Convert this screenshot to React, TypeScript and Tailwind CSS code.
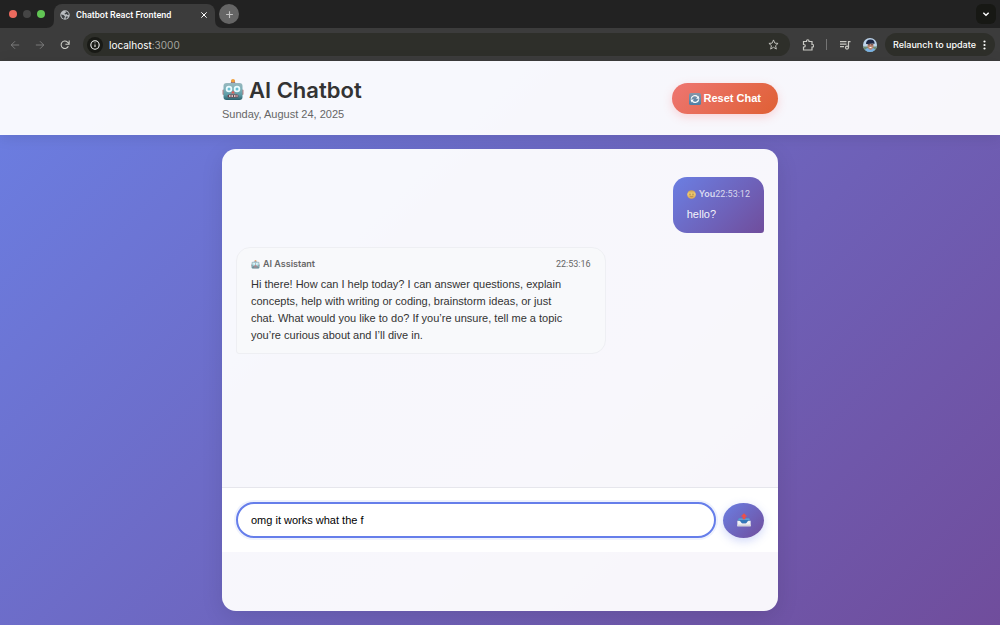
import { useState } from "react";

type IconProps = { className?: string };

function Robot({ className }: IconProps) {
  return (
    <svg viewBox="0 0 44 44" className={className} aria-hidden="true">
      <defs>
        <linearGradient id="robot-face" x1="0" y1="0" x2="0" y2="1">
          <stop offset="0" stopColor="#9ab9bf" />
          <stop offset=".35" stopColor="#7fb0b8" />
          <stop offset=".7" stopColor="#5c9ba6" />
          <stop offset="1" stopColor="#2b5f6b" />
        </linearGradient>
      </defs>
      <rect x="18" y="3" width="8" height="8" fill="#7b6a92" />
      <circle cx="22" cy="4" r="4" fill="#f1a13c" />
      <path d="M13 10c1-4 17-4 18 0z" fill="#7b6a92" />
      <rect x="1" y="21" width="4" height="11" rx="2" fill="#b98084" />
      <rect x="39" y="21" width="4" height="11" rx="2" fill="#b98084" />
      <rect x="3" y="8" width="38" height="34" rx="6" fill="url(#robot-face)" />
      <circle cx="14" cy="20" r="6.500" fill="#e9fbff" />
      <circle cx="30" cy="20" r="6.500" fill="#e9fbff" />
      <circle cx="14" cy="20" r="3" fill="#69bfd2" />
      <circle cx="30" cy="20" r="3" fill="#69bfd2" />
      <path d="M22 23l4 6h-8z" fill="#df5a55" />
      <rect x="11" y="31" width="22" height="6" rx="3" fill="#70414b" />
      <path d="M14 34h3M19 34h3M24 34h3M29 34h2" stroke="#f4eeee" strokeWidth="3" />
    </svg>
  );
}

function RefreshTile({ className }: IconProps) {
  return (
    <svg viewBox="0 0 32 32" className={className} aria-hidden="true">
      <defs>
        <linearGradient id="tile" x1="0" y1="0" x2="0" y2="1">
          <stop offset="0" stopColor="#8596a8" />
          <stop offset="1" stopColor="#4d7fa8" />
        </linearGradient>
      </defs>
      <rect width="32" height="32" rx="5" fill="url(#tile)" />
      <path d="M6 15a10 10 0 0 1 17-5M26 17a10 10 0 0 1-17 5" fill="none" stroke="#fff" strokeWidth="3.4" />
      <path d="M28 15h-9l6-8zM4 17h9l-6 8z" fill="#fff" />
    </svg>
  );
}

function Smiley({ className }: IconProps) {
  return (
    <svg viewBox="0 0 24 24" className={className} aria-hidden="true">
      <defs>
        <linearGradient id="smile" x1="0" y1="0" x2="0" y2="1">
          <stop offset="0" stopColor="#c99d50" />
          <stop offset=".4" stopColor="#efcb70" />
          <stop offset="1" stopColor="#dda653" />
        </linearGradient>
      </defs>
      <circle cx="12" cy="12" r="11.500" fill="url(#smile)" />
      <ellipse cx="8" cy="11" rx="1.300" ry="1.800" fill="#7d6139" />
      <ellipse cx="16" cy="11" rx="1.300" ry="1.800" fill="#7d6139" />
      <path d="M7 16q5 3 10 0" fill="none" stroke="#80603a" strokeWidth="1.300" />
    </svg>
  );
}

function Outbox({ className }: IconProps) {
  return (
    <svg viewBox="0 0 40 40" className={className} aria-hidden="true">
      <path d="M5 15h30l4 10H1z" fill="#3977b4" />
      <path d="M5 15h30l2 5H3z" fill="#5d9dd6" />
      <path d="M1 22h8l6 7h10l6-7h8v16H1z" fill="#f1f1f4" />
      <path d="M1 33h38v5H1z" fill="#d5d5da" />
      <path d="M7 20h26l-7 9H14z" fill="#3378b9" />
      <path d="M20 1l9 9h-5v8h-8v-8h-5z" fill="#ed5148" />
    </svg>
  );
}

function Globe({ className }: IconProps) {
  return (
    <svg viewBox="0 0 20 20" className={className} aria-hidden="true">
      <circle cx="10" cy="10" r="9.500" fill="#b9bcc0" />
      <path d="M11 2l5 3 2 4-3 1-2-2-3 1-1-2 3-2zM2 9l5 1 3 3-1 2-1 3-4-3zM12 13l4 0-2 4-3 0z" fill="#3d4043" />
    </svg>
  );
}

function Avatar({ className }: IconProps) {
  return (
    <svg viewBox="0 0 28 28" className={className} aria-hidden="true">
      <defs>
        <clipPath id="avatar-clip"><circle cx="14" cy="14" r="14" /></clipPath>
      </defs>
      <g clipPath="url(#avatar-clip)">
        <path d="M0 0h28v28H0z" fill="#bcd3ea" />
        <path d="M0 17h28v11H0z" fill="#6e8b72" />
        <path d="M2 28q2-7 8-8h9q6 1 7 8z" fill="#79b2e6" />
        <path d="M9 11h12v6q-1 6-6 7-5-1-6-7z" fill="#b98672" />
        <path d="M6 12q0-9 9-9t8 9l-3-1-11 1z" fill="#1d2744" />
        <path d="M10 13.500h4M16 13.500h4" stroke="#4b3538" strokeWidth="1.500" />
        <path d="M12 18h6q-3 4-6 0z" fill="#fff" />
      </g>
    </svg>
  );
}

function ToolIcon({ d, className }: { d: string; className: string }) {
  return (
    <svg viewBox="0 0 24 24" fill="none" stroke="currentColor" strokeWidth="2" className={className} aria-hidden="true">
      <path d={d} />
    </svg>
  );
}

function BrowserChrome() {
  return (
    <div className="shrink-0 text-white">
      <div className="flex h-7 items-end bg-[#222222]">
        <div className="flex h-7 w-[46px] items-center gap-[6px] pl-[9px]">
          <span className="size-2 rounded-full bg-[#ec6a5e]" />
          <span className="size-2 rounded-full bg-[#454545]" />
          <span className="size-2 rounded-full bg-[#61c554]" />
        </div>
        <svg viewBox="0 0 8 8" className="size-2 shrink-0" aria-hidden="true"><path d="M8 0v8H0q8 0 8-8" fill="#3c3c3c" /></svg>
        <div className="flex h-6 w-[161px] items-center rounded-t-lg bg-[#3c3c3c] px-[6px] pb-[6px] pt-1">
          <Globe className="size-[10px]" />
          <span className="ml-[6px] flex-1 whitespace-nowrap font-[Roboto,sans-serif] text-[9px] font-medium leading-4">Chatbot React Frontend</span>
          <button aria-label="Close tab" className="p-px">
            <ToolIcon d="M4 4l16 16M20 4L4 20" className="size-2 stroke-[3]" />
          </button>
        </div>
        <svg viewBox="0 0 8 8" className="size-2 shrink-0" aria-hidden="true"><path d="M0 0v8h8q-8 0-8-8" fill="#3c3c3c" /></svg>
        <div className="flex h-7 flex-1 items-center justify-between pl-0 pr-1">
          <button aria-label="New tab" className="-ml-1 flex size-5 items-center justify-center rounded-full bg-[#656565] text-[#c4c4c4]">
            <ToolIcon d="M12 3v18M3 12h18" className="size-[9px] stroke-[3]" />
          </button>
          <button aria-label="Search tabs" className="flex size-5 items-center justify-center rounded-md bg-[#171814]">
            <ToolIcon d="M4 8l8 8 8-8" className="size-2 stroke-[4]" />
          </button>
        </div>
      </div>
      <div className="flex h-[33px] items-center bg-[#3c3c3c] pr-[5px]">
        <div className="flex w-[83px] items-center gap-[15px] pl-[10px]">
          <button aria-label="Back" className="text-[#858585]"><ToolIcon d="M22 12H3M12 3l-9 9 9 9" className="size-[10px]" /></button>
          <button aria-label="Forward" className="text-[#858585]"><ToolIcon d="M2 12h19M12 3l9 9-9 9" className="size-[10px]" /></button>
          <button aria-label="Reload" className="text-[#cecfc9]"><ToolIcon d="M20 15a9 9 0 1 1-2-10l4 4M22 1v9h-9" className="size-[10px] stroke-[2.500]" /></button>
        </div>
        <div className="flex h-[23px] flex-1 items-center rounded-full bg-[#2e2f2a] pl-1 pr-[11px]">
          <button aria-label="Site information" className="flex size-4 items-center justify-center rounded-full bg-[#191a16]">
            <ToolIcon d="M12 2a10 10 0 1 0 0 20 10 10 0 1 0 0-20M12 11v6M12 6v2" className="size-[10px] stroke-[2.500]" />
          </button>
          <span className="ml-[6px] flex-1 font-[Inter,sans-serif] text-[10px] leading-4">localhost<span className="text-[#a4a49f]">:3000</span></span>
          <button aria-label="Bookmark this page" className="text-[#c9c9c4]">
            <ToolIcon d="M12 2l3 7 7 .6-5.500 5 1.700 7.400-6.200-4-6.200 4 1.700-7.400-5.500-5L9 9z" className="size-[11px]" />
          </button>
        </div>
        <button aria-label="Extensions" className="ml-3 text-[#c9c9c4]">
          <ToolIcon d="M3 5h6V4a2.500 2.500 0 0 1 5 0v1h6v6h1a2.500 2.500 0 0 1 0 5h-1v6H3v-6h1a2.500 2.500 0 0 0 0-5H3z" className="size-3 stroke-[2.400]" />
        </button>
        <span className="ml-3 h-[11px] w-px bg-[#747474]" />
        <button aria-label="Media controls" className="ml-3 text-[#c9c9c4]">
          <ToolIcon d="M2 5h13M2 10h13M2 15h8M19 17V5h4M19 17a3 3 0 1 1-6 0 3 3 0 0 1 6 0" className="size-3 stroke-[2.500]" />
        </button>
        <button aria-label="Profile" className="ml-3"><Avatar className="size-[14px]" /></button>
        <button className="ml-2 flex h-[23px] items-center gap-[6px] rounded-full bg-[#2e2f2a] px-2 font-[Inter,sans-serif] text-[9px] font-medium">
          <span className="whitespace-nowrap">Relaunch to update</span>
          <svg viewBox="0 0 6 20" fill="currentColor" className="h-[10px] w-[5px]" aria-hidden="true">
            <circle cx="3" cy="3" r="2.200" /><circle cx="3" cy="10" r="2.200" /><circle cx="3" cy="17" r="2.200" />
          </svg>
        </button>
      </div>
    </div>
  );
}

export default function App() {
  const [draft, setDraft] = useState("omg it works what the f");

  return (
    <div className="flex min-h-screen flex-col font-[Inter,sans-serif] text-[#333333]">
      <BrowserChrome />
      <div className="flex flex-1 flex-col bg-[linear-gradient(135deg,#6b7fe3_0%,#704d9c_100%)]">
        <header className="border-b border-white/20 bg-white/95 px-4 pb-[11px] pt-[13px] shadow-[0_2px_14px_rgba(0,0,0,0.1)]">
          <div className="mx-auto flex max-w-[556px] items-center justify-between">
            <div>
              <h1 className="flex items-center gap-[5px] text-[22px] font-semibold leading-8">
                <Robot className="size-[22px]" />
                AI Chatbot
              </h1>
              <p className="font-['Liberation_Sans',sans-serif] text-[11px] leading-[17px] text-[#666666]">Sunday, August 24, 2025</p>
            </div>
            <button className="flex h-[31px] items-center gap-[3px] rounded-full bg-[linear-gradient(135deg,#ee7672,#df6034)] px-[17px] font-['Liberation_Sans',sans-serif] text-[11px] font-bold text-white shadow-[0_3px_10px_rgba(255,107,107,0.25)]">
              <RefreshTile className="size-3" />
              Reset Chat
            </button>
          </div>
        </header>
        <main className="mx-auto flex w-full max-w-[584px] flex-1 flex-col p-[14px]">
          <section aria-label="Conversation" className="flex flex-1 flex-col overflow-hidden rounded-[14px] bg-white/95 pb-[59px] shadow-[0_6px_22px_rgba(0,0,0,0.1)]">
            <div className="flex flex-1 flex-col gap-[14px] px-[14px] pb-[14px] pt-[28px]">
              <article className="self-end rounded-[14px] rounded-br-[3px] bg-[linear-gradient(135deg,#6b7fe3_0%,#704d9c_100%)] px-[14px] py-[10px] text-white/95">
                <div className="flex items-center justify-between text-[9px] leading-[14px] text-white/75">
                  <strong className="flex items-center gap-[3px] font-semibold"><Smiley className="size-[9px]" />You</strong>
                  <time className="font-[Roboto,sans-serif]">22:53:12</time>
                </div>
                <p className="mt-[5px] font-['Liberation_Sans',sans-serif] text-[11px] leading-[17px]">hello?</p>
              </article>
              <article className="w-[70%] self-start rounded-[14px] rounded-bl-[3px] border border-[#eeeff3] bg-[#f8f9fb] px-[14px] py-[9px]">
                <div className="flex items-center justify-between text-[9px] leading-[14px] text-[#666666]">
                  <strong className="flex items-center gap-[3px] font-semibold"><Robot className="size-[9px] opacity-80" />AI Assistant</strong>
                  <time className="font-[Roboto,sans-serif]">22:53:16</time>
                </div>
                <p className="mt-[5px] pr-[18px] font-['Liberation_Sans',sans-serif] text-[11px] leading-[17px]">
                  Hi there! How can I help today? I can answer questions, explain concepts, help with writing or coding, brainstorm ideas, or just chat. What would you like to do? If you’re unsure, tell me a topic you’re curious about and I’ll dive in.
                </p>
              </article>
            </div>
            <form className="flex items-center gap-[7px] border-t border-[#e6e6ec] bg-white p-[14px]" onSubmit={(event) => event.preventDefault()}>
              <input
                aria-label="Message"
                value={draft}
                onChange={(event) => setDraft(event.target.value)}
                className="h-9 min-w-0 flex-1 rounded-full border-2 border-[#667eea] bg-white px-[13px] font-['Liberation_Sans',sans-serif] text-[11px] text-black shadow-[0_0_0_2px_rgba(102,126,234,0.1)] outline-none"
              />
              <button aria-label="Send message" className="flex h-[35px] w-[41px] items-center justify-center rounded-[50%] bg-[linear-gradient(135deg,#6b7fe3_0%,#704d9c_100%)] shadow-[0_3px_10px_rgba(102,126,234,0.3)]">
                <Outbox className="size-[14px]" />
              </button>
            </form>
          </section>
        </main>
      </div>
    </div>
  );
}
